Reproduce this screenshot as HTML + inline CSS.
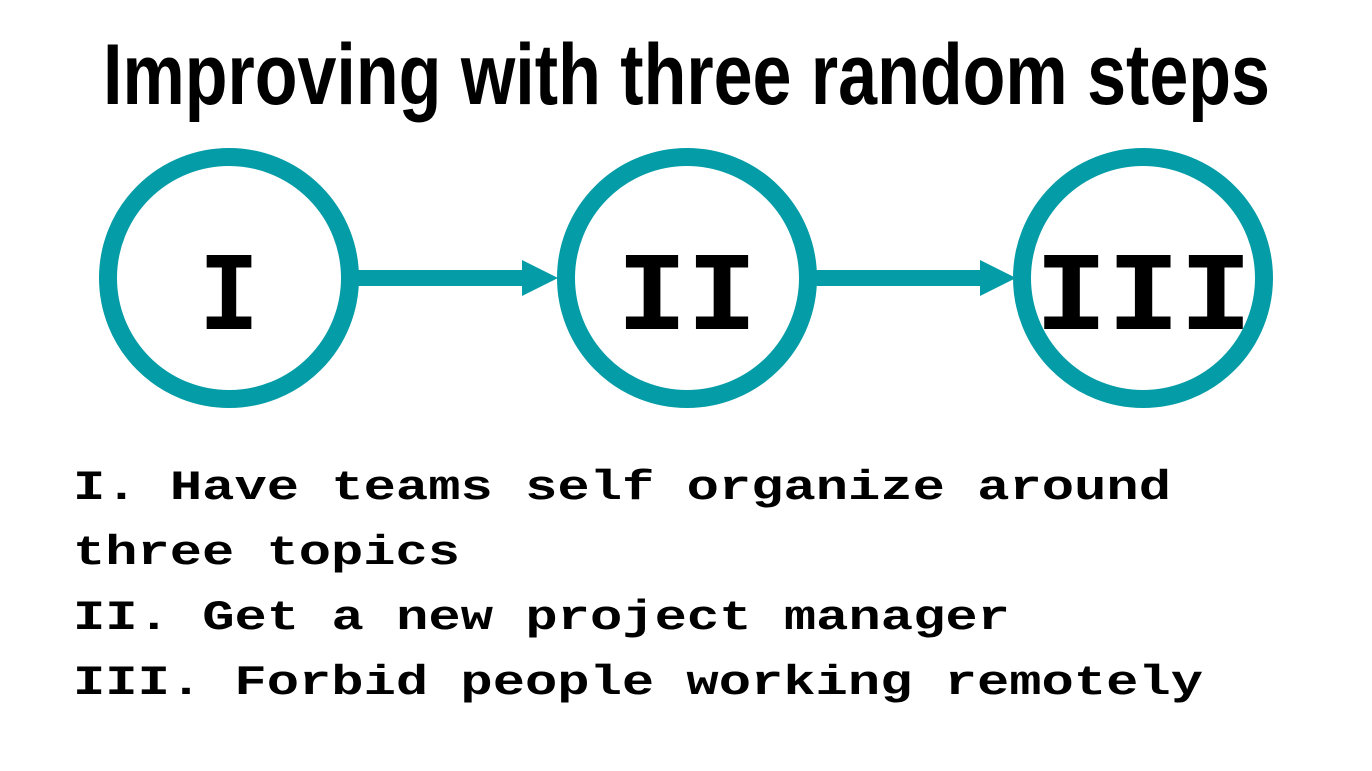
<!DOCTYPE html>
<html><head><meta charset="utf-8"><style>
html,body{margin:0;padding:0;background:#fff;}
svg{display:block}
</style></head><body>
<svg width="1372" height="771" viewBox="0 0 1372 771" xmlns="http://www.w3.org/2000/svg">
<rect width="1372" height="771" fill="#fff"/>
<text x="103" y="104" font-family="'Liberation Sans Narrow','Liberation Sans',sans-serif" font-weight="bold" font-size="86" textLength="1167" lengthAdjust="spacingAndGlyphs" fill="#000">Improving with three random steps</text>
<g fill="none" stroke="#049ca6" stroke-width="18">
<circle cx="229" cy="278" r="121"/>
<circle cx="687" cy="278" r="121"/>
<circle cx="1143" cy="278" r="121"/>
</g>
<g fill="#049ca6">
<rect x="355" y="270" width="170" height="16"/>
<polygon points="522,260 558,278 522,296"/>
<rect x="813" y="270" width="170" height="16"/>
<polygon points="980,260 1016,278 980,296"/>
</g>
<g font-family="'Liberation Mono',monospace" font-weight="bold" font-size="112" fill="#000">
<text x="199" y="329" textLength="60" lengthAdjust="spacingAndGlyphs">I</text>
<text x="617" y="329" textLength="140" lengthAdjust="spacingAndGlyphs">II</text>
<text x="1035" y="329" textLength="217" lengthAdjust="spacingAndGlyphs">III</text>
</g>
<g font-family="'Liberation Mono',monospace" font-weight="bold" font-size="42" fill="#000">
<text x="73" y="499" textLength="1098" lengthAdjust="spacingAndGlyphs">I. Have teams self organize around</text>
<text x="73" y="564" textLength="387" lengthAdjust="spacingAndGlyphs">three topics</text>
<text x="73" y="629" textLength="937" lengthAdjust="spacingAndGlyphs">II. Get a new project manager</text>
<text x="73" y="694" textLength="1130" lengthAdjust="spacingAndGlyphs">III. Forbid people working remotely</text>
</g>
</svg>
</body></html>
